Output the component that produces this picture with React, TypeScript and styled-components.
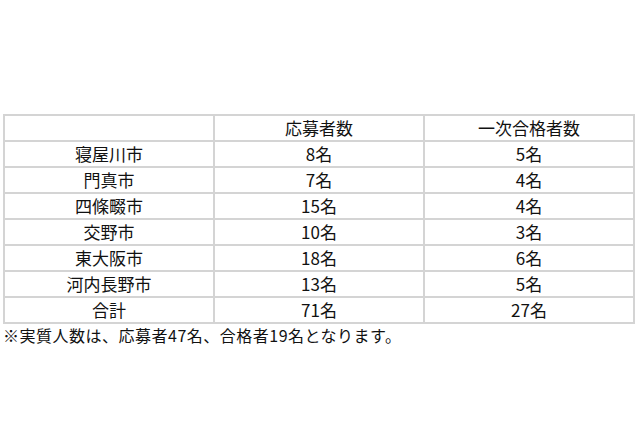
import React from 'react';
import styled, { createGlobalStyle } from 'styled-components';

const GlobalStyle = createGlobalStyle`
  html, body {
    margin: 0;
    padding: 0;
    background: #ffffff;
  }
  body {
    font-family: "Noto Sans CJK JP", "Noto Sans", sans-serif;
    color: #111111;
  }
`;

const Page = styled.div`
  width: 640px;
  height: 426px;
  padding: 114px 5px 0 3px;
  box-sizing: border-box;
  overflow: hidden;
`;

const Table = styled.table`
  width: 632px;
  border-collapse: collapse;
  border: 2px solid #cfcfcf;
  table-layout: fixed;
`;

const Cell = styled.td`
  height: 24px;
  padding: 0;
  border: 2px solid #d4d4d4;
  text-align: center;
  vertical-align: middle;
  font-size: 17px;
  line-height: 22px;
  color: #111111;
`;

const Note = styled.p`
  margin: 0;
  padding-top: 1px;
  font-size: 16px;
  line-height: 20px;
  letter-spacing: 0.5px;
  color: #111111;
`;

const rows: [string, string, string][] = [
  ['寝屋川市', '8名', '5名'],
  ['門真市', '7名', '4名'],
  ['四條畷市', '15名', '4名'],
  ['交野市', '10名', '3名'],
  ['東大阪市', '18名', '6名'],
  ['河内長野市', '13名', '5名'],
  ['合計', '71名', '27名'],
];

export default function App() {
  return (
    <>
      <GlobalStyle />
      <Page>
        <Table>
          <tbody>
            <tr>
              <Cell></Cell>
              <Cell>応募者数</Cell>
              <Cell>一次合格者数</Cell>
            </tr>
            {rows.map(([city, applied, passed]) => (
              <tr key={city}>
                <Cell>{city}</Cell>
                <Cell>{applied}</Cell>
                <Cell>{passed}</Cell>
              </tr>
            ))}
          </tbody>
        </Table>
        <Note>※実質人数は、応募者47名、合格者19名となります。</Note>
      </Page>
    </>
  );
}
